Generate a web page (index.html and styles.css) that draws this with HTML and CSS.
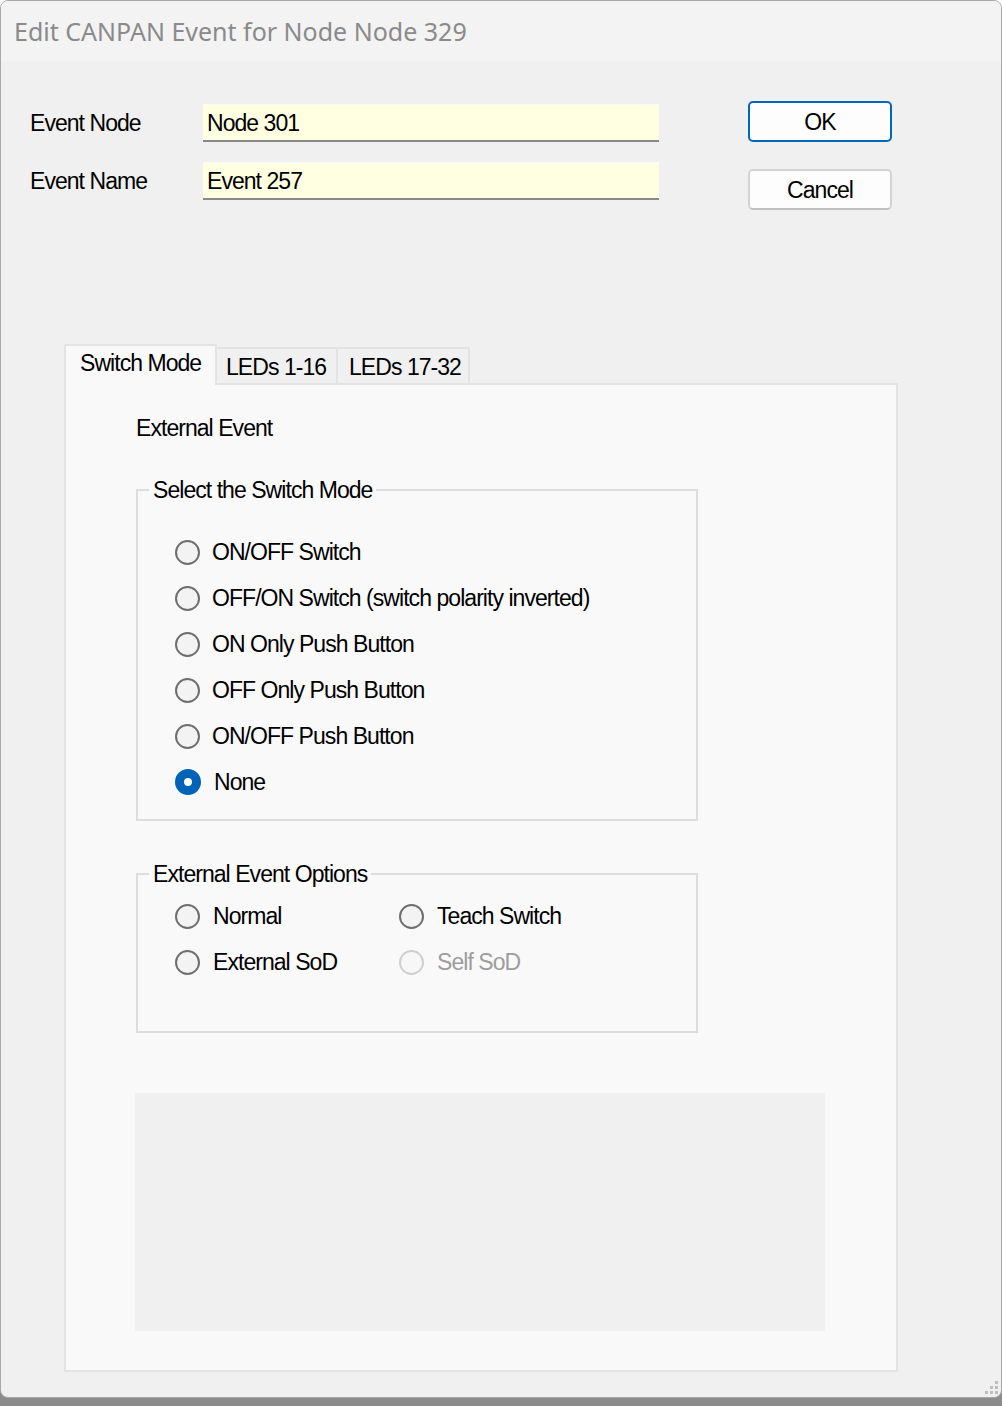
FILE: index.html
```html
<!DOCTYPE html>
<html>
<head>
<meta charset="utf-8">
<link rel="stylesheet" href="styles.css">
</head>
<body>
<div class="window">
  <div class="titlebar">Edit CANPAN Event for Node Node 329</div>
  <div class="client">
    <div class="top">
      <div class="fields">
        <div class="label">Event Node</div>
        <div class="input">Node 301</div>
        <div class="label">Event Name</div>
        <div class="input">Event 257</div>
      </div>
      <div class="buttons">
        <div class="btn btn-default">OK</div>
        <div class="btn">Cancel</div>
      </div>
    </div>
    <div class="tabs">
      <div class="tab tab-active">Switch Mode</div>
      <div class="tab tab-1">LEDs 1-16</div>
      <div class="tab tab-2">LEDs 17-32</div>
    </div>
    <div class="panel">
      <div class="heading">External Event</div>
      <fieldset class="group group-mode">
        <legend>Select the Switch Mode</legend>
        <div class="radio"><span class="dot"></span><span>ON/OFF Switch</span></div>
        <div class="radio"><span class="dot"></span><span>OFF/ON Switch (switch polarity inverted)</span></div>
        <div class="radio"><span class="dot"></span><span>ON Only Push Button</span></div>
        <div class="radio"><span class="dot"></span><span>OFF Only Push Button</span></div>
        <div class="radio"><span class="dot"></span><span>ON/OFF Push Button</span></div>
        <div class="radio"><span class="dot dot-on"></span><span class="txt-on">None</span></div>
      </fieldset>
      <fieldset class="group group-opts">
        <legend>External Event Options</legend>
        <div class="opts">
          <div class="radio"><span class="dot"></span><span class="txt-on">Normal</span></div>
          <div class="radio"><span class="dot"></span><span class="txt-on">Teach Switch</span></div>
          <div class="radio"><span class="dot"></span><span class="txt-on">External SoD</span></div>
          <div class="radio radio-disabled"><span class="dot"></span><span class="txt-on">Self SoD</span></div>
        </div>
      </fieldset>
      <div class="blank"></div>
    </div>
  </div>
  <svg class="grip" width="16" height="16" viewBox="0 0 16 16">
    <rect x="11" y="1" width="3" height="3" fill="#bdbdbd"/>
    <rect x="6" y="6" width="3" height="3" fill="#bdbdbd"/>
    <rect x="11" y="6" width="3" height="3" fill="#bdbdbd"/>
    <rect x="1" y="11" width="3" height="3" fill="#bdbdbd"/>
    <rect x="6" y="11" width="3" height="3" fill="#bdbdbd"/>
    <rect x="11" y="11" width="3" height="3" fill="#bdbdbd"/>
  </svg>
</div>
</body>
</html>
```

FILE: styles.css
```css
html, body {
  margin: 0;
  padding: 0;
}
body {
  width: 1002px;
  height: 1406px;
  background: linear-gradient(to bottom, #ffffff 0, #ffffff 1390px, #8c8c8c 1390px, #8a8a8a 1406px);
  font-family: "Liberation Sans", Arial, sans-serif;
  font-size: 23px;
  letter-spacing: -0.95px;
  color: #000;
  overflow: hidden;
}
.window {
  position: relative;
  width: 1002px;
  height: 1398px;
  box-sizing: border-box;
  border: 1px solid #a9a9a9;
  border-radius: 8px;
  overflow: hidden;
  background: #f0f0f0;
  display: flex;
  flex-direction: column;
}
.titlebar {
  height: 60px;
  flex: none;
  background: #f3f3f3;
  padding-left: 13px;
  display: flex;
  align-items: center;
  font-family: "Noto Sans", "Open Sans", sans-serif;
  font-size: 25px;
  letter-spacing: 0;
  color: #8a8a8a;
}
.client {
  flex: 1;
  display: flex;
  flex-direction: column;
  line-height: 28px;
}
.top {
  display: flex;
  padding: 40px 0 0 29px;
}
.fields {
  display: grid;
  grid-template-columns: 173px 456px;
  row-gap: 20px;
  align-items: center;
  margin-top: 3px;
  align-self: flex-start;
}
.input {
  height: 38px;
  box-sizing: border-box;
  background: #ffffe1;
  border-top: 1px solid #fafafa;
  border-bottom: 2px solid #8a8a8a;
  padding: 4px 0 0 4px;
}
.buttons {
  display: flex;
  flex-direction: column;
  gap: 27px;
  margin-left: 89px;
}
.btn {
  width: 144px;
  height: 41px;
  box-sizing: border-box;
  border: 2px solid #d3d3d3;
  border-bottom-color: #c0c0c0;
  border-radius: 5px;
  background: #fdfdfd;
  display: flex;
  align-items: center;
  justify-content: center;
}
.btn-default {
  border: 2px solid #0067c0;
}
.tabs {
  display: flex;
  align-items: flex-end;
  margin: 134px 0 0 63px;
  height: 41px;
}
.tab {
  height: 38px;
  box-sizing: border-box;
  border: 2px solid #e3e3e3;
  border-left-width: 0;
  background: #f0f0f0;
  padding: 4px 0 0 9px;
  position: relative;
  z-index: 1;
}
.tab-active {
  height: 41px;
  width: 153px;
  border-left-width: 2px;
  border-bottom: none;
  background: #f9f9f9;
  padding: 3px 0 0 14px;
  z-index: 2;
}
.tab-1 {
  width: 121px;
}
.tab-2 {
  width: 132px;
  padding-left: 11px;
}
.panel {
  margin: -2px 0 0 63px;
  width: 834px;
  height: 989px;
  box-sizing: border-box;
  border: 2px solid #e3e3e3;
  background: #f9f9f9;
  padding-left: 70px;
  display: flex;
  flex-direction: column;
  align-items: flex-start;
}
.heading {
  margin-top: 29px;
}
.group {
  margin: 0;
  width: 562px;
  box-sizing: border-box;
  border: 2px solid #dddddd;
  padding: 0 0 0 37px;
  min-width: 0;
}
.group legend {
  margin-left: -26px;
  padding: 0 4px;
  line-height: 28px;
}
.group-mode {
  margin-top: 34px;
  padding-top: 25px;
  padding-bottom: 14px;
}
.group-opts {
  margin-top: 39px;
  padding-top: 5px;
  padding-bottom: 46px;
}
.radio {
  height: 46px;
  display: flex;
  align-items: center;
  gap: 12px;
}
.dot {
  width: 25px;
  height: 25px;
  box-sizing: border-box;
  border: 2px solid #6e6e6e;
  border-radius: 50%;
  background: #f3f3f3;
  flex: none;
}
.dot-on {
  width: 26px;
  height: 26px;
  border: 9px solid #0063b8;
  background: #ffffff;
}
.txt-on {
  margin-left: 1px;
}
.opts {
  display: grid;
  grid-template-columns: 224px 200px;
}
.radio-disabled {
  color: #9d9d9d;
}
.radio-disabled .dot {
  border-color: #cfcfcf;
  background: #f7f7f7;
}
.blank {
  margin: 60px 0 0 -1px;
  width: 690px;
  height: 238px;
  background: #f0f0f0;
}
.grip {
  position: absolute;
  right: 1px;
  bottom: 1px;
}
```
